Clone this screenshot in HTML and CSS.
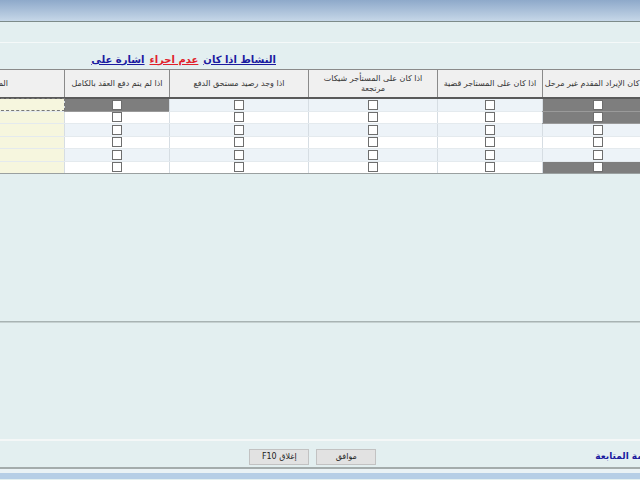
FILE: index.html
```html
<!DOCTYPE html>
<html lang="ar">
<head>
  <meta charset="UTF-8" />
  <title>اشارة على</title>
  <link rel="stylesheet" href="styles.css">
</head>
<body>

<div class="titlebar"></div>
<div class="toolbar"></div>

<div class="caption">
  <a href="#" class="lnk">النشاط اذا كان</a>
  <a href="#" class="lnk red">عدم اجراء</a>
  <a href="#" class="lnk">اشارة على</a>
</div>

<!-- جدول الشروط -->
<div class="grid-wrap">
  <table class="grid" dir="rtl">
    <colgroup>
      <col style="width:110px">
      <col style="width:105px">
      <col style="width:129px">
      <col style="width:139px">
      <col style="width:105px">
      <col style="width:120px">
    </colgroup>
    <thead>
      <tr>
        <th>اذا كان الإيراد المقدم غير مرحل</th>
        <th>اذا كان على المستاجر قضية</th>
        <th>اذا كان على المستأجر شيكات<br>مرتجعة</th>
        <th>اذا وجد رصيد مستحق الدفع</th>
        <th>اذا لم يتم دفع العقد بالكامل</th>
        <th class="first">الملاحظات</th>
      </tr>
    </thead>
    <tbody>
      <tr class="alt">
        <td class="dark"><span class="cb"></span></td>
        <td><span class="cb"></span></td>
        <td><span class="cb"></span></td>
        <td><span class="cb"></span></td>
        <td class="dark"><span class="cb"></span></td>
        <td class="note focus"></td>
      </tr>
      <tr>
        <td class="dark"><span class="cb"></span></td>
        <td><span class="cb"></span></td>
        <td><span class="cb"></span></td>
        <td><span class="cb"></span></td>
        <td><span class="cb"></span></td>
        <td class="note"></td>
      </tr>
      <tr class="alt">
        <td><span class="cb"></span></td>
        <td><span class="cb"></span></td>
        <td><span class="cb"></span></td>
        <td><span class="cb"></span></td>
        <td><span class="cb"></span></td>
        <td class="note"></td>
      </tr>
      <tr>
        <td><span class="cb"></span></td>
        <td><span class="cb"></span></td>
        <td><span class="cb"></span></td>
        <td><span class="cb"></span></td>
        <td><span class="cb"></span></td>
        <td class="note"></td>
      </tr>
      <tr class="alt">
        <td><span class="cb"></span></td>
        <td><span class="cb"></span></td>
        <td><span class="cb"></span></td>
        <td><span class="cb"></span></td>
        <td><span class="cb"></span></td>
        <td class="note"></td>
      </tr>
      <tr>
        <td class="dark"><span class="cb"></span></td>
        <td><span class="cb"></span></td>
        <td><span class="cb"></span></td>
        <td><span class="cb"></span></td>
        <td><span class="cb"></span></td>
        <td class="note"></td>
      </tr>
    </tbody>
  </table>
</div>

<div class="area-top"></div>
<div class="area-bottom"></div>

<div class="footer">
  <a href="#" class="follow">قائمة المتابعة</a>
  <div class="buttons">
    <button class="btn">موافق</button>
    <button class="btn">إغلاق F10</button>
  </div>
</div>

<div class="statusbar"></div>

</body>
</html>
```

FILE: styles.css
```css
html, body {
  margin: 0;
  padding: 0;
  height: 480px;
  overflow: hidden;
}
body {
  font-family: "DejaVu Sans", sans-serif;
  background: #e3eff0;
  color: #222;
}
.titlebar {
  height: 21px;
  background: linear-gradient(#8ea9ca, #c6d7e8);
  border-bottom: 1px solid #7d8b8a;
}
.toolbar {
  height: 20px;
  border-bottom: 1px solid #f5f9f9;
}
.caption {
  height: 26px;
  display: flex;
  flex-direction: row-reverse;
  justify-content: flex-start;
  align-items: center;
  gap: 5px;
  padding-right: 364px;
  padding-top: 6px;
  box-sizing: border-box;
}
.lnk {
  font-size: 10px;
  font-weight: bold;
  color: #1b1ba0;
  text-decoration: underline;
  direction: rtl;
}
.lnk.red {
  color: #e0202a;
}
.grid-wrap {
  height: 106px;
  overflow: hidden;
}
.grid {
  border-collapse: collapse;
  table-layout: fixed;
  width: 708px;
  margin-left: -56px;
  font-size: 8px;
}
.grid th {
  height: 27px;
  background: #f0f0f0;
  border: 1px solid #8a8a8a;
  border-bottom: 2px solid #5a5a5a;
  font-weight: normal;
  color: #333;
  padding: 0 2px;
  white-space: nowrap;
  line-height: 10px;
}
.grid th.first {
  text-align: right;
  padding-right: 56px;
}
.grid td {
  height: 11.5px;
  padding: 0;
  text-align: center;
  background: #fff;
  border-left: 1px solid #d6dde3;
  border-bottom: 1px solid #e4eaee;
  line-height: 0;
}
.grid tr.alt td {
  background: #edf3f8;
}
.grid tbody tr:last-child td {
  border-bottom: 1px solid #9aa0a0;
}
.grid tr td.dark {
  background: #7e7e7e;
  border-bottom-color: #9a9a9a;
}
.grid tr td.note {
  background: #f6f6de;
  border-right: 1px solid #9a9a9a;
}
.grid td.focus {
  outline: 1px dashed #777;
  outline-offset: -1px;
}
.cb {
  display: inline-block;
  width: 8px;
  height: 8px;
  background: #fff;
  border: 1px solid #6e6e6e;
  vertical-align: middle;
}
.area-top {
  height: 146px;
  border-bottom: 1px solid #a8b3b3;
  box-shadow: 0 1px 0 #c5d0d0;
}
.area-bottom {
  height: 117px;
  border-bottom: 2px solid #f4f7f7;
}
.footer {
  height: 28px;
  display: flex;
  flex-direction: row-reverse;
  align-items: center;
  padding-top: 5px;
  box-sizing: border-box;
  border-bottom: 2px solid #a4acac;
}
.follow {
  font-size: 9px;
  font-weight: bold;
  color: #1b1ba0;
  text-decoration: none;
  margin-right: -16px;
  margin-top: -2px;
  white-space: nowrap;
  direction: rtl;
}
.buttons {
  display: flex;
  flex-direction: row-reverse;
  gap: 7px;
  margin-right: 219px;
}
.btn {
  width: 60px;
  height: 16px;
  padding: 0;
  font-family: "DejaVu Sans", sans-serif;
  font-size: 8px;
  color: #222;
  background: #e2e2e2;
  border: 1px solid #c2c2c2;
  direction: rtl;
}
.statusbar {
  height: 4px;
  background: #eaf2f5;
  border-bottom: 6px solid #b6cee6;
}
```
